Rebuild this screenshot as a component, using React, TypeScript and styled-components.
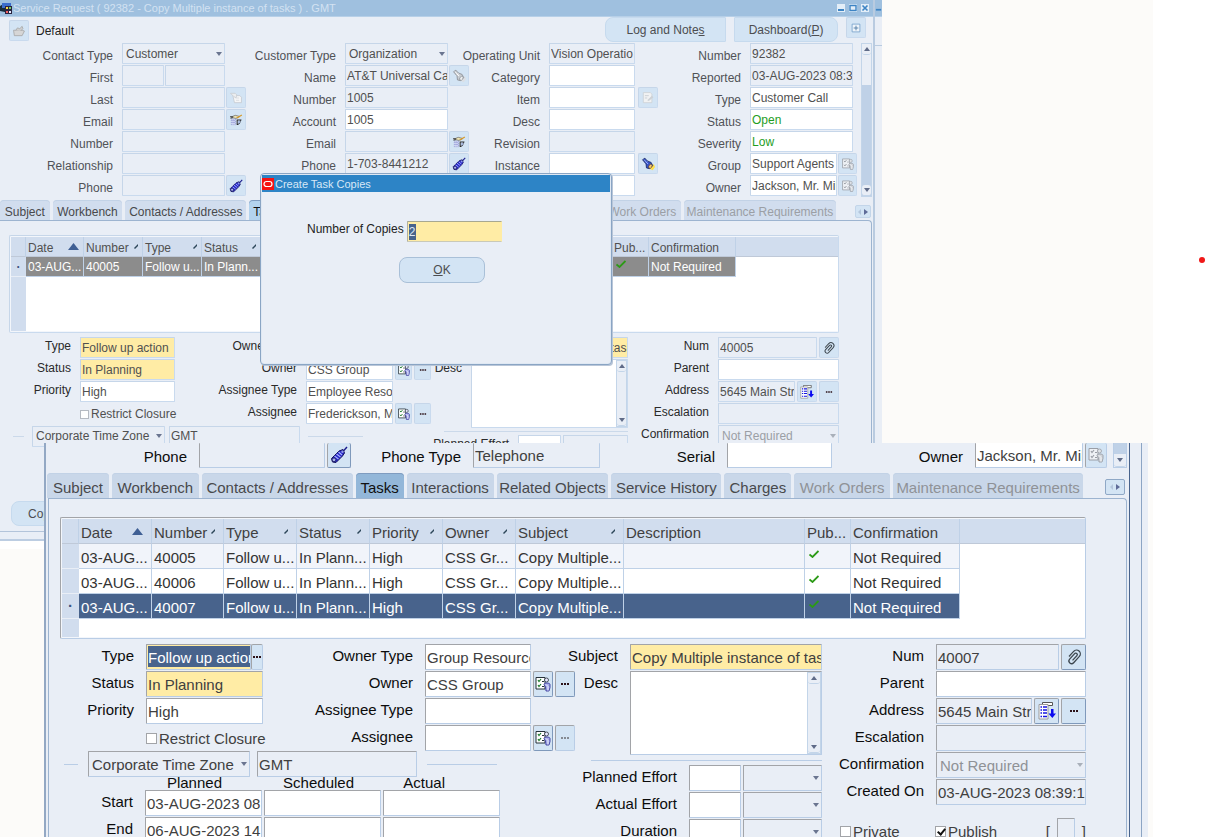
import React, { useId } from 'react';
import styled, { createGlobalStyle, css, ThemeProvider } from 'styled-components';

interface Metrics {
  font: number;
  row: number;
  field: number;
  labelGap: number;
  icon: number;
  lineTop: string;
  lineEnd: string;
  line: string;
  button: string;
  tab: string;
  tabActive: string;
  tabHeight: number;
  valueInk: string;
  labelInk: string;
  mutedInk: string;
  gridRow: number;
  gridHeight: number;
  selectedRow: string;
  columns: number[];
  blocks: number[];
  pair: number[];
  w: {
    a: number;
    b: number;
    bArea: number;
    c: number;
    d: number;
    zone: number;
    zoneLead: number;
    small: number;
    wide: number;
    unit: number;
    aux: number;
    auxWide: number;
  };
}

const compact: Metrics = {
  font: 12,
  row: 22,
  field: 21,
  labelGap: 9,
  icon: 14,
  lineTop: '#c6d6e9',
  lineEnd: '#c9daee',
  line: '#cbd9ea',
  button: '#d3e4f4',
  tab: '#d1ddee',
  tabActive: '#b3d3ee',
  tabHeight: 20,
  valueInk: '#505050',
  labelInk: '#2a2a2a',
  mutedInk: '#9b9fa5',
  gridRow: 20,
  gridHeight: 98,
  selectedRow: '#8c8c8c',
  columns: [15, 58, 59, 59, 59, 59, 59, 87, 146, 37, 87],
  blocks: [420, 199, 211],
  pair: [166, 254],
  w: { a: 95, b: 87, bArea: 123, c: 157, d: 121, zone: 133, zoneLead: 11, small: 43, wide: 95, unit: 65, aux: 17, auxWide: 20 },
};

const regular: Metrics = {
  font: 15,
  row: 27,
  field: 26,
  labelGap: 12,
  icon: 18,
  lineTop: '#a2a4a8',
  lineEnd: '#b9cde6',
  line: '#b9cde6',
  button: '#d3e4f4',
  tab: '#c9d7e9',
  tabActive: '#93b7d9',
  tabHeight: 25,
  valueInk: '#404040',
  labelInk: '#0c0c0c',
  mutedInk: '#8f9297',
  gridRow: 25,
  gridHeight: 122,
  selectedRow: '#48638c',
  columns: [17, 73, 72, 73, 73, 73, 73, 108, 181, 46, 109],
  blocks: [516, 246, 264],
  pair: [203, 313],
  w: { a: 117, b: 106, bArea: 151, c: 192, d: 150, zone: 162, zoneLead: 14, small: 52, wide: 117, unit: 79, aux: 20, auxWide: 25 },
};

declare module 'styled-components' {
  export interface DefaultTheme extends Metrics {}
}

const face = '#e9eef6';
const yellow = '#ffeca5';

const GlobalStyle = createGlobalStyle`
  * { box-sizing: border-box; }
  body { margin: 0; background: #fff; font-family: "Liberation Sans", Arial, sans-serif; overflow: hidden; }
  button, input, select, textarea { font: inherit; margin: 0; outline: none; }
`;

/* ---------- desktop and window frames ---------- */

const Page = styled.div`
  position: relative;
  height: 100vh;
  overflow: hidden;
  padding-right: 53px;
`;

const Desktop = styled.main`
  position: relative;
  height: 100%;
  background: #fcfbf9;
`;

const Marker = styled.span`
  position: absolute;
  top: 257px;
  right: 1px;
  width: 6px;
  height: 6px;
  border-radius: 50%;
  background: #f01818;
`;

const BackWindow = styled.section`
  position: absolute;
  top: 0;
  left: 0;
  width: 76.5%;
  display: flex;
  background: ${face};
  border-bottom: 2px solid #bccde2;
  box-shadow: 0 8px 0 #fff;
  font-size: ${p => p.theme.font}px;
`;

const BackBody = styled.div`
  flex: 1;
  min-width: 0;
  border-right: 2px solid #b9cbe0;
  padding-bottom: 7px;
`;

const OuterStrip = styled.div`
  width: 7px;
  height: 46px;
  border-bottom: 1px solid #b9cbe0;
`;

const TitleBar = styled.header`
  display: flex;
  align-items: center;
  height: 17px;
  background: #9fc0df;
  border-bottom: 1px solid #b7d0e8;
  color: #d3e2f2;
  font-size: 11px;
  white-space: pre;
`;

const TitleText = styled.h1`
  flex: 1;
  margin: 0;
  font-size: 11px;
  font-weight: 400;
`;

const TitleButtons = styled.div`
  display: flex;
  gap: 4px;
  padding-right: 4px;
`;

const TitleButton = styled.button`
  display: flex;
  width: 8px;
  height: 8px;
  padding: 0;
  border: 0;
  background: #e3eef8;
`;

const FrontWindow = styled.section`
  position: absolute;
  top: 443px;
  bottom: 0;
  left: 44px;
  right: 5px;
  display: flex;
  background: ${face};
  border-left: 2px solid #93a8c4;
  overflow: hidden;
  font-size: ${p => p.theme.font}px;
`;

const FrontBody = styled.div`
  flex: 1;
  min-width: 0;
  border-right: 1px solid #48638c;
`;

const FrontEdge = styled.div`
  width: 12px;
  margin-right: 6px;
  border-right: 1px solid #8ca5c4;
`;

/* ---------- form parts ---------- */

type Tone = 'read' | 'edit' | 'required' | 'marked';

const bevel = css`
  border: 1px solid ${p => p.theme.lineTop};
  border-right-color: ${p => p.theme.lineEnd};
  border-bottom-color: ${p => p.theme.lineEnd};
  border-radius: 1px;
`;

const fills: Record<Tone, string> = {
  read: face,
  edit: '#fff',
  required: yellow,
  marked: `linear-gradient(#48638c, #48638c) 1px 1px / 100% 21px no-repeat, ${yellow}`,
};

const Input = styled.input<{ $w?: number; $tone?: Tone; $ink?: string }>`
  ${bevel}
  flex: ${p => (p.$w ? 'none' : '1')};
  width: ${p => (p.$w ? `${p.$w}px` : 'auto')};
  min-width: 0;
  height: ${p => p.theme.field}px;
  padding: 0 0 0 1px;
  background: ${p => fills[p.$tone ?? 'edit']};
  color: ${p => p.$ink ?? (p.$tone === 'marked' ? '#fff' : p.theme.valueInk)};
`;

const SelectBox = styled.span<{ $w?: number }>`
  position: relative;
  display: flex;
  flex: ${p => (p.$w ? 'none' : '1')};
  width: ${p => (p.$w ? `${p.$w}px` : 'auto')};
  min-width: 0;
`;

const SelectControl = styled.select`
  ${bevel}
  appearance: none;
  width: 100%;
  height: ${p => p.theme.field}px;
  padding: 0 0 0 3px;
  background: ${face};
  color: ${p => p.theme.valueInk};
  &:disabled { color: ${p => p.theme.mutedInk}; opacity: 1; }
`;

const Caret = styled.svg`
  position: absolute;
  right: 3px;
  top: 50%;
  width: 6px;
  height: 4px;
  margin-top: -2px;
  pointer-events: none;
`;

const IconButton = styled.button<{ $w?: number; $bare?: boolean }>`
  display: flex;
  flex: none;
  align-items: center;
  justify-content: center;
  width: ${p => p.$w ?? p.theme.w.auxWide}px;
  height: ${p => p.theme.field}px;
  padding: 0;
  border: 1px solid ${p => p.theme.lineTop};
  border-right-color: ${p => (p.$bare ? p.theme.lineEnd : p.theme.font > 12 ? '#7f99bb' : p.theme.lineEnd)};
  border-bottom-color: ${p => (p.$bare ? p.theme.lineEnd : p.theme.font > 12 ? '#7f99bb' : p.theme.lineEnd)};
  border-radius: 2px;
  background: ${p => p.theme.button};
  svg { width: ${p => p.theme.icon}px; height: ${p => p.theme.icon}px; flex: none; }
`;

const Row = styled.div`
  display: flex;
  align-items: flex-start;
  height: ${p => p.theme.row}px;
`;

const Label = styled.label<{ $low?: boolean }>`
  display: flex;
  justify-content: flex-end;
  flex: 1;
  min-width: 0;
  height: ${p => p.theme.field}px;
  line-height: ${p => p.theme.field - 2}px;
  padding-top: ${p => (p.$low ? 4 : 0)}px;
  margin-right: ${p => p.theme.labelGap}px;
  color: ${p => (p.$low ? '#505256' : p.theme.labelInk)};
  white-space: nowrap;
`;

const Area = styled.div<{ $w: number; $gap?: number }>`
  display: flex;
  flex: none;
  width: ${p => p.$w}px;
  gap: ${p => p.$gap ?? 2}px;
`;

interface FieldProps {
  label: string;
  width: number;
  low?: boolean;
  gap?: number;
  children: (id: string) => React.ReactNode;
}

function Field({ label, width, low, gap, children }: FieldProps) {
  const id = useId();
  return (
    <Row>
      <Label htmlFor={id} $low={low}>{label}</Label>
      <Area $w={width} $gap={gap}>{children(id)}</Area>
    </Row>
  );
}

interface SelectProps {
  id?: string;
  name?: string;
  value: string;
  w?: number;
  disabled?: boolean;
}

function Select({ id, name, value, w, disabled }: SelectProps) {
  return (
    <SelectBox $w={w}>
      <SelectControl id={id} aria-label={name} defaultValue={value} disabled={disabled}>
        <option>{value}</option>
      </SelectControl>
      <Caret viewBox="0 0 6 4"><path d="M0 0h6L3 4z" fill={disabled ? '#a9b0ba' : '#6a7590'} /></Caret>
    </SelectBox>
  );
}

/* ---------- icons ---------- */

const PhoneIcon = () => (
  <svg viewBox="0 0 18 18">
    <path d="M17 1 12.500 6" stroke="#1a1a8c" strokeWidth="1.400" />
    <path d="M1.500 12.500 9 5l4-1.500 1.500 3.500-2 3-6.500 6.500-3.500-.5z" fill="#2626c8" stroke="#15155c" />
    <path d="M4.500 10l4 3M6.500 8l4 3M8.500 6l3.500 3" stroke="#a9b6ff" strokeWidth="1.100" />
    <circle cx="4" cy="13.800" r="1.900" fill="#aab4ee" stroke="#15155c" strokeWidth=".8" />
    <circle cx="12.500" cy="5.800" r="1.200" fill="#8f9ae8" />
  </svg>
);

const MailIcon = () => (
  <svg viewBox="0 0 18 18">
    <path d="M2 5.500 8 3l6 1.500L9 7z" fill="#f0e6b4" stroke="#555" strokeWidth=".8" />
    <path d="M1.500 4.500l4 .5M2 7l3-1" stroke="#333" />
    <path d="M3 8h5.500v7H3z" fill="#dfe3fa" stroke="#8187cc" strokeWidth=".9" strokeDasharray="1.500 1" />
    <path d="M4 10h4M4 12.500h4" stroke="#8187cc" />
    <path d="M10.500 8.500v7M10.500 9H16M15 9l-1.500 4-2.500 2" stroke="#2a2a2a" strokeWidth="1.300" fill="none" />
    <path d="M10 6.500l6.500-4" stroke="#d89a28" strokeWidth="1.600" />
    <path d="M12 10h3l-1 3-2 1z" fill="#9fb0d8" />
  </svg>
);

const TorchIcon = ({ grey }: { grey?: boolean }) => (
  <svg viewBox="0 0 18 18">
    <path d="M11 15l5.500-6L18 13l-3 4z" fill={grey ? '#dcdfe4' : '#ffe04a'} />
    <path d="M2 3.500 5 1.500 8 5l5 2 2 4-4 4-4-1-.5-5z" fill={grey ? '#c9cdd2' : '#3552c4'} stroke={grey ? '#85898f' : '#10205c'} />
    <path d="M4 3.500l5 5.500M8 6l-2 2" stroke={grey ? '#fff' : '#9fb4ff'} strokeWidth="1.200" />
    <ellipse cx="12" cy="12" rx="2" ry="2.800" transform="rotate(35 12 12)" fill={grey ? '#eceef0' : '#f0c878'} stroke={grey ? '#85898f' : '#5c3a20'} strokeWidth=".8" />
  </svg>
);

const RosterIcon = ({ grey }: { grey?: boolean }) => {
  const ink = grey ? '#9a9ea6' : '#26323a';
  return (
    <svg viewBox="0 0 18 18">
      <path d="M2 2.500h9v11.500H2z" fill={grey ? '#eef1f5' : '#fff'} stroke={ink} />
      <path d="M4 5l1 1.500L7 4M4 10l1 1.500L7 9" fill="none" stroke={grey ? ink : '#1c7a2c'} strokeWidth="1.200" />
      <path d="M8 6.500h2M8 11.500h2" stroke={ink} />
      <circle cx="12.500" cy="5" r="2" fill={grey ? '#dfe3e8' : '#e6e6ff'} stroke={ink} strokeWidth=".8" />
      <path d="M10 9.500c0-2 6-2 6 0v3l-1 3.500h-3l-.5-4z" fill={grey ? '#d2d6dc' : '#a9aeea'} stroke={grey ? ink : '#3a3a9c'} strokeWidth=".9" />
      <path d="M12 9.500l2 2v4" stroke="#fff" fill="none" strokeWidth=".8" />
    </svg>
  );
};

const PageIcon = () => (
  <svg viewBox="0 0 18 18">
    <path d="M5 6h9l2 2v7H7z" fill="#f5f6f7" stroke="#c3c8ce" />
    <path d="M2 3h6l2 2-1 4-3-2z" fill="#eceef0" stroke="#c8ccd1" />
    <path d="M9 9h4M9 12h4" stroke="#d5d8dc" />
  </svg>
);

const NoteIcon = () => (
  <svg viewBox="0 0 18 18">
    <path d="M3 2h9l2 2v11H3z" fill="#f1f2f3" stroke="#cbd0d5" />
    <path d="M5 6h5M5 9h3" stroke="#c3c8cd" />
    <path d="M8 12l6-6 2 2-6 5z" fill="#cdd1d6" />
  </svg>
);

const FolderIcon = () => (
  <svg viewBox="0 0 18 18">
    <path d="M2 8h11l3 1-3 6H3z" fill="#d6d6d6" stroke="#a4a4a4" />
    <path d="M5 8l2-3 3 1 3-3 1 3-3 3" fill="#cfcfcf" stroke="#a4a4a4" />
  </svg>
);

const ClipIcon = () => (
  <svg viewBox="0 0 18 18">
    <g transform="rotate(42 9 9)" fill="none">
      <path d="M5 12V5a3.800 3.800 0 0 1 7.600 0v8.500a2.700 2.700 0 0 1-5.400 0V6a1.500 1.500 0 0 1 3 0v6.500" stroke="#3c464e" strokeWidth="1.300" />
      <path d="M6 12V5.500M11.500 13V5" stroke="#b9c3c9" strokeWidth=".8" />
    </g>
  </svg>
);

const AddressIcon = () => (
  <svg viewBox="0 0 18 18">
    <path d="M4.500.5h10v3h-10z" fill="#fff" stroke="#555" />
    <path d="M1 2.500h9v14.500H1z" fill="#fff" stroke="#9a9a9a" />
    <path d="M2.500 5h1.500M2.500 8h1.500M2.500 11h1.500M2.500 14.500h1.500M5 5h4M5 8h4M5 11h4M5 14.500h4" stroke="#1414e0" strokeWidth="1.400" />
    <path d="M13 7h2.500v4.500H18l-3.700 4.500-3.800-4.500H13z" fill="#0a0af0" />
  </svg>
);

const DotsIcon = ({ grey }: { grey?: boolean }) => (
  <svg viewBox="0 0 18 18">
    <path d="M5 8h2v2H5zM8 8h2v2H8zM11 8h2v2h-2z" fill={grey ? '#858a92' : '#2c1218'} />
  </svg>
);

const AppIcon = () => (
  <svg width="13" height="13" viewBox="0 0 13 13">
    <path d="M0 4l5-3v9L0 9z" fill="#182c3a" />
    <path d="M2 1h9v5H2z" fill="#3b6ccc" />
    <path d="M5 4h7v8H5z" fill="#2a2340" />
    <path d="M6 5h2v2H6z" fill="#ffd84a" />
    <path d="M9 5h2v2H9z" fill="#6fd06a" />
    <path d="M6 9h2v2H6z" fill="#f06262" />
    <path d="M9 9h2v2H9z" fill="#e8ecff" />
  </svg>
);

const LogoIcon = () => (
  <svg width="12" height="12" viewBox="0 0 12 12">
    <path d="M0 0h12v12H0z" fill="#f51414" />
    <rect x="2" y="3.500" width="8" height="5" rx="2.500" fill="none" stroke="#fff" strokeWidth="1.200" />
  </svg>
);

const Check = () => (
  <svg width="10" height="8" viewBox="0 0 10 8">
    <path d="M.5 4.500 3.500 7 9.500 1" fill="none" stroke="#2c9a16" strokeWidth="1.800" />
  </svg>
);

const CellIcon = styled.svg`
  flex: none;
  margin-bottom: 3px;
`;

/* ---------- scroll bar ---------- */

const Track = styled.div<{ $w: number; $filled?: boolean }>`
  display: flex;
  flex-direction: column;
  justify-content: space-between;
  flex: none;
  width: ${p => p.$w}px;
  border: 1px solid #c3d5e9;
  background: ${p => (p.$filled ? `linear-gradient(${face} 27%, #bfd1e7 27%)` : face)};
`;

const TrackButton = styled.button`
  display: flex;
  align-items: center;
  justify-content: center;
  height: 11px;
  padding: 0;
  border: 1px solid #c3d5e9;
  border-width: 0 0 1px;
  border-radius: 3px;
  background: ${face};
`;

const Up = () => <svg width="6" height="4" viewBox="0 0 6 4"><path d="M0 4h6L3 0z" fill="#5f6b88" /></svg>;
const Down = () => <svg width="6" height="4" viewBox="0 0 6 4"><path d="M0 0h6L3 4z" fill="#5f6b88" /></svg>;

function ScrollBar({ w, filled }: { w: number; filled?: boolean }) {
  return (
    <Track $w={w} $filled={filled}>
      <TrackButton aria-label="Scroll up"><Up /></TrackButton>
      <TrackButton aria-label="Scroll down"><Down /></TrackButton>
    </Track>
  );
}

/* ---------- tabs ---------- */

const TabRow = styled.nav`
  display: flex;
  align-items: center;
  padding-left: ${p => (p.theme.font > 12 ? 1 : 0)}px;
`;

const TabList = styled.div`
  flex: 1;
  display: grid;
  grid-template-columns:
    minmax(0, 62fr) minmax(0, 87fr) minmax(0, 151fr) minmax(0, 48fr) minmax(0, 87fr)
    minmax(0, 112fr) minmax(0, 110fr) minmax(0, 67fr) minmax(0, 96fr) minmax(0, 190fr);
  gap: 3px;
`;

const Tab = styled.button<{ $active?: boolean }>`
  height: ${p => p.theme.tabHeight}px;
  padding: 4px 0 0;
  display: flex;
  align-items: center;
  justify-content: center;
  border: 0;
  border-radius: 4px 4px 0 0;
  background: ${p => (p.$active ? p.theme.tabActive : p.theme.tab)};
  color: ${p => (p.$active ? '#101010' : '#48494c')};
  box-shadow: inset 0 1px 0 ${p => (p.$active ? '#7f9cc0' : '#c2d2e6')};
  white-space: nowrap;
  &:disabled { color: ${p => p.theme.mutedInk}; }
`;

const TabScroll = styled.button`
  display: flex;
  align-items: center;
  justify-content: center;
  width: ${p => (p.theme.font > 12 ? 20 : 16)}px;
  height: ${p => (p.theme.font > 12 ? 16 : 13)}px;
  margin: 3px ${p => (p.theme.font > 12 ? 4 : 2)}px 0 ${p => (p.theme.font > 12 ? 22 : 19)}px;
  padding: 0;
  border: 1px solid ${p => (p.theme.font > 12 ? '#8fa8c6' : '#c3d5e9')};
  border-radius: 2px;
  background: ${p => p.theme.button};
`;

const tabNames = [
  'Subject', 'Workbench', 'Contacts / Addresses', 'Tasks', 'Interactions',
  'Related Objects', 'Service History', 'Charges', 'Work Orders', 'Maintenance Requirements',
];

function Tabs() {
  return (
    <TabRow>
      <TabList>
        {tabNames.map((name, i) => (
          <Tab key={name} $active={name === 'Tasks'} disabled={i > 7}>{name}</Tab>
        ))}
      </TabList>
      <TabScroll aria-label="More tabs">
        <svg width="10" height="6" viewBox="0 0 10 6">
          <path d="M3 0v6L0 3z" fill="#b4c6dc" />
          <path d="M6 0v6l4-3z" fill="#5f6b98" />
        </svg>
      </TabScroll>
    </TabRow>
  );
}

/* ---------- task grid ---------- */

const Panel = styled.div`
  border: 1px solid #9db4d0;
  border-bottom-width: 0;
  border-top-right-radius: 4px;
  ${p => p.theme.font > 12
    ? css`margin: 0 2px 0 2px; padding: 18px 40px 0 11px;`
    : css`margin-right: 1px; border-left: 0; padding: 14px 32px 0 9px;`}
`;

const GridFrame = styled.div`
  height: ${p => p.theme.gridHeight}px;
  padding: 1px 0 1px 1px;
  border: 1px solid ${p => p.theme.lineTop};
  border-right-color: ${p => p.theme.lineEnd};
  border-bottom-color: ${p => p.theme.lineEnd};
  border-radius: 2px;
  background: #f3f6fb;
  margin-bottom: ${p => (p.theme.font > 12 ? 5 : 4)}px;
`;

const Grid = styled.table`
  width: 100%;
  height: 100%;
  table-layout: fixed;
  border-collapse: separate;
  border-spacing: 0;
  background: #fff;
`;

const GridRow = styled.tr<{ $state?: 'first' | 'plain' | 'selected' }>`
  height: ${p => p.theme.gridRow}px;
  td {
    background: ${p => (p.$state === 'selected' ? p.theme.selectedRow : p.$state === 'first' ? '#f1f4fa' : '#fff')};
    color: ${p => (p.$state === 'selected' ? '#fff' : '#333')};
  }
  td:last-child { background: #fff; border: 0; }
`;

const HeadCell = styled.th`
  height: ${p => p.theme.gridRow}px;
  padding: 0 0 0 2px;
  border-right: 1px solid #bfd1e7;
  border-bottom: 1px solid #bfc9d8;
  background: #d1ddee;
  color: ${p => p.theme.valueInk};
  font-weight: 400;
  text-align: left;
  white-space: nowrap;
  overflow: hidden;
  &:last-child { border-right: 0; }
`;

const HeadContent = styled.span`
  display: flex;
  align-items: center;
  justify-content: space-between;
  padding: 3px ${p => (p.theme.font > 12 ? 8 : 4)}px 0 0;
`;

const Cell = styled.td`
  padding: ${p => (p.theme.font > 12 ? 2 : 1)}px 0 0 2px;
  border-right: 1px solid #bfd1e7;
  border-bottom: 1px solid #bfd1e7;
  white-space: nowrap;
  overflow: hidden;
  line-height: ${p => p.theme.gridRow - 4}px;
  svg { display: block; margin: 0 0 6px 2px; }
`;

const RowHead = styled.th`
  padding: 0;
  border-bottom: 1px solid ${face};
  background: #d1ddee;
  color: #3b5480;
  text-align: center;
  line-height: 10px;
`;

const RestHead = styled.td`
  background: #d1ddee;
  padding: 0;
`;

const RestBody = styled.td`
  background: #fff;
  padding: 0;
`;

const headers = ['Date', 'Number', 'Type', 'Status', 'Priority', 'Owner', 'Subject', 'Description', 'Pub...', 'Confirmation'];

function TaskGrid({ numbers, columns }: { numbers: string[]; columns: number[] }) {
  return (
    <GridFrame>
      <Grid>
        <colgroup>
          {columns.map((w, i) => <col key={i} width={w} />)}
          <col />
        </colgroup>
        <thead>
          <tr>
            <HeadCell />
            {headers.map((name, i) => (
              <HeadCell key={name}>
                <HeadContent>
                  {name}
                  {i === 0 && <CellIcon width="11" height="7" viewBox="0 0 11 7"><path d="M5.500 0 11 7H0z" fill="#3f5f94" /></CellIcon>}
                  {i > 0 && i < 7 && <CellIcon width="4" height="5" viewBox="0 0 4 5"><path d="M4 0v2L1 5 0 4z" fill="#2c4658" /></CellIcon>}
                </HeadContent>
              </HeadCell>
            ))}
            <HeadCell />
          </tr>
        </thead>
        <tbody>
          {numbers.map((number, i) => {
            const last = i === numbers.length - 1;
            return (
              <GridRow key={number} $state={last ? 'selected' : i === 0 ? 'first' : 'plain'}>
                <RowHead scope="row">{last ? '·' : ''}</RowHead>
                <Cell>03-AUG...</Cell>
                <Cell>{number}</Cell>
                <Cell>Follow u...</Cell>
                <Cell>In Plann...</Cell>
                <Cell>High</Cell>
                <Cell>CSS Gr...</Cell>
                <Cell>Copy Multiple...</Cell>
                <Cell />
                <Cell><Check /></Cell>
                <Cell>Not Required</Cell>
                <Cell />
              </GridRow>
            );
          })}
          <tr>
            <RestHead />
            <RestBody colSpan={11} />
          </tr>
        </tbody>
      </Grid>
    </GridFrame>
  );
}

/* ---------- task detail ---------- */

const Detail = styled.div`
  display: grid;
  grid-template-columns: ${p => p.theme.blocks.map(n => `minmax(0, ${n}fr)`).join(' ')};
  min-height: 164px;
`;

const Pair = styled.div`
  display: grid;
  grid-template-columns: ${p => p.theme.pair.map(n => `minmax(0, ${n}fr)`).join(' ')};
`;

const CheckLabel = styled.label`
  display: flex;
  align-items: center;
  gap: 2px;
  height: ${p => p.theme.field}px;
  padding-top: 1px;
  color: ${p => p.theme.valueInk};
  white-space: nowrap;
`;

const CheckBox = styled.input`
  position: relative;
  appearance: none;
  flex: none;
  width: ${p => (p.theme.font > 12 ? 11 : 9)}px;
  height: ${p => (p.theme.font > 12 ? 11 : 9)}px;
  border: 1px solid ${p => (p.theme.font > 12 ? '#a2a4a8' : '#b5bac2')};
  background: #fff;
  &:checked::after {
    content: '';
    position: absolute;
    left: 3px;
    top: 0;
    width: 3px;
    height: 6px;
    border: solid #111;
    border-width: 0 2px 2px 0;
    transform: rotate(40deg);
  }
`;

const ZoneRow = styled.div`
  display: flex;
  align-items: center;
  gap: ${p => (p.theme.font > 12 ? 10 : 8)}px;
  height: ${p => (p.theme.font > 12 ? 24 : 22)}px;
  padding-left: 4px;
`;

const ZoneFields = styled.div`
  display: flex;
  gap: ${p => (p.theme.font > 12 ? 7 : 4)}px;
`;

const Rule = styled.hr<{ $w?: number }>`
  flex: none;
  width: ${p => (p.$w ? `${p.$w}px` : 'auto')};
  margin: 0;
  border: 0;
  border-top: 1px solid ${p => p.theme.line};
`;

const MiddleRule = styled(Rule)`
  margin: 2px 0 ${p => (p.theme.font > 12 ? 4 : 3)}px 15px;
`;

const TimeGrid = styled.div`
  display: grid;
  grid-template-columns: 74px repeat(3, ${p => p.theme.w.wide}px);
  column-gap: 2px;
  grid-auto-rows: ${p => p.theme.row}px;
  grid-template-rows: 14px;
  padding-left: 9px;
  color: ${p => p.theme.labelInk};
  text-align: right;
`;

const TimeHead = styled.span<{ $inset: number }>`
  padding-right: ${p => p.$inset}px;
  line-height: 14px;
`;

const TimeLabel = styled.label`
  padding-right: ${p => p.theme.labelGap - 2}px;
  line-height: ${p => p.theme.field - 2}px;
`;

const MemoRow = styled(Row)`
  height: ${p => (p.theme.font > 12 ? 87 : 70)}px;
`;

const MemoBox = styled.div`
  ${bevel}
  display: flex;
  width: ${p => p.theme.w.c}px;
  height: ${p => (p.theme.font > 12 ? 84 : 69)}px;
`;

const Memo = styled.textarea`
  flex: 1;
  min-width: 0;
  border: 0;
  resize: none;
  background: #fff;
`;

const OptionRow = styled.div`
  display: grid;
  grid-template-columns: 95px 1fr auto;
  align-items: center;
  margin-top: 12px;
  padding-left: 18px;
`;

const Flex = styled.div`
  display: flex;
  align-items: center;
  gap: 7px;
  color: ${p => p.theme.valueInk};
`;

interface Task {
  number: string;
  assigneeType: string;
  assignee: string;
  ownerType: string;
  editing?: boolean;
}

const efforts = ['Planned Effort', 'Actual Effort', 'Duration'];

function TimeFields() {
  const startId = useId();
  const endId = useId();
  return (
    <TimeGrid>
      <span />
      <TimeHead $inset={40}>Planned</TimeHead>
      <TimeHead $inset={27}>Scheduled</TimeHead>
      <TimeHead $inset={55}>Actual</TimeHead>
      <TimeLabel htmlFor={startId}>Start</TimeLabel>
      <Input id={startId} defaultValue="03-AUG-2023 08:39" />
      <Input aria-label="Scheduled start" />
      <Input aria-label="Actual start" />
      <TimeLabel htmlFor={endId}>End</TimeLabel>
      <Input id={endId} defaultValue="06-AUG-2023 14:39" />
      <Input aria-label="Scheduled end" />
      <Input aria-label="Actual end" />
    </TimeGrid>
  );
}

function TaskDetail({ task, m }: { task: Task; m: Metrics }) {
  const w = m.w;
  const memoId = useId();
  return (
    <Detail>
      <div>
        <Pair>
          <div>
            <Field label="Type" width={w.a} gap={0}>
              {id => (
                <>
                  <Input id={id} $tone={task.editing ? 'marked' : 'required'} defaultValue="Follow up action" />
                  {task.editing && <IconButton $w={12} $bare aria-label="List of types"><DotsIcon /></IconButton>}
                </>
              )}
            </Field>
            <Field label="Status" width={w.a}>{id => <Input id={id} $tone="required" defaultValue="In Planning" />}</Field>
            <Field label="Priority" width={w.a}>{id => <Input id={id} defaultValue="High" />}</Field>
            <Row>
              <Label as="span" />
              <Area $w={w.a}>
                <CheckLabel><CheckBox type="checkbox" />Restrict Closure</CheckLabel>
              </Area>
            </Row>
          </div>
          <div>
            <Field label="Owner Type" width={w.bArea}>{id => <Input id={id} $w={w.b} defaultValue={task.ownerType} />}</Field>
            <Field label="Owner" width={w.bArea}>
              {id => (
                <>
                  <Input id={id} $w={w.b} defaultValue="CSS Group" />
                  <IconButton $w={w.aux} aria-label="Find owner"><RosterIcon /></IconButton>
                  <IconButton $w={w.aux} aria-label="List of owners"><DotsIcon /></IconButton>
                </>
              )}
            </Field>
            <Field label="Assignee Type" width={w.bArea}>{id => <Input id={id} $w={w.b} defaultValue={task.assigneeType} />}</Field>
            <Field label="Assignee" width={w.bArea}>
              {id => (
                <>
                  <Input id={id} $w={w.b} defaultValue={task.assignee} />
                  <IconButton $w={w.aux} aria-label="Find assignee"><RosterIcon /></IconButton>
                  <IconButton $w={w.aux} $bare aria-label="List of assignees"><DotsIcon grey={task.editing} /></IconButton>
                </>
              )}
            </Field>
          </div>
        </Pair>
        <ZoneRow>
          <Rule $w={w.zoneLead} />
          <ZoneFields>
            <Select name="Time zone source" value="Corporate Time Zone" w={w.zone} />
            <Input aria-label="Time zone" $w={w.zone - 2} $tone="read" readOnly defaultValue="GMT" />
          </ZoneFields>
          <Rule $w={w.zoneLead * 5} />
        </ZoneRow>
        {task.editing && <TimeFields />}
      </div>
      <div>
        <Field label="Subject" width={w.c}>{id => <Input id={id} $tone="required" defaultValue="Copy Multiple instance of tasks" />}</Field>
        <MemoRow>
          <Label htmlFor={memoId}>Desc</Label>
          <MemoBox>
            <Memo id={memoId} />
            <ScrollBar w={m.font > 12 ? 14 : 11} />
          </MemoBox>
        </MemoRow>
        <MiddleRule />
        {(task.editing ? efforts : efforts.slice(0, 1)).map(name => (
          <Field key={name} label={name} width={w.small + w.unit + 2}>
            {id => (
              <>
                <Input id={id} $w={w.small} />
                <Select name={`${name} unit`} value="" w={w.unit} />
              </>
            )}
          </Field>
        ))}
      </div>
      <div>
        <Field label="Num" width={w.d}>
          {id => (
            <>
              <Input id={id} $tone="read" readOnly defaultValue={task.number} />
              <IconButton aria-label="Attachments"><ClipIcon /></IconButton>
            </>
          )}
        </Field>
        <Field label="Parent" width={w.d}>{id => <Input id={id} />}</Field>
        <Field label="Address" width={w.d}>
          {id => (
            <>
              <Input id={id} $tone="read" readOnly defaultValue="5645 Main Street" />
              <IconButton aria-label="Address details"><AddressIcon /></IconButton>
              <IconButton aria-label="List of addresses"><DotsIcon /></IconButton>
            </>
          )}
        </Field>
        <Field label="Escalation" width={w.d}>{id => <Input id={id} $tone="read" readOnly />}</Field>
        <Field label="Confirmation" width={w.d}>{id => <Select id={id} value="Not Required" disabled />}</Field>
        {task.editing && (
          <>
            <Field label="Created On" width={w.d}>{id => <Input id={id} $tone="read" readOnly defaultValue="03-AUG-2023 08:39:17" />}</Field>
            <OptionRow>
              <CheckLabel><CheckBox type="checkbox" />Private</CheckLabel>
              <CheckLabel><CheckBox type="checkbox" defaultChecked />Publish</CheckLabel>
              <Flex>
                [<Input aria-label="Flexfield" $w={18} $tone="read" readOnly />]
              </Flex>
            </OptionRow>
          </>
        )}
      </div>
    </Detail>
  );
}

/* ---------- back window content ---------- */

const Toolbar = styled.div`
  display: flex;
  align-items: flex-start;
  gap: 8px;
  height: 26px;
  padding: 0 7px 0 9px;
`;

const ToolGroup = styled.div`
  display: flex;
  flex: 1;
  align-items: center;
  gap: 7px;
  padding-top: 3px;
  color: #222;
`;

const WideButton = styled.button<{ $w: number; $side: 'left' | 'right' | 'both' }>`
  width: ${p => p.$w}px;
  height: 25px;
  padding: 0;
  border: 1px solid #c6daee;
  border-radius: ${p => (p.$side === 'left' ? '8px 1px 1px 8px' : p.$side === 'right' ? '1px 8px 8px 1px' : '8px')};
  background: #d3e4f4;
  color: #4c4d50;
`;

const HeaderForm = styled.div`
  display: flex;
  padding-right: 1px;
`;

const HeaderGroups = styled.div`
  flex: 1;
  display: grid;
  grid-template-columns: minmax(0, 246fr) minmax(0, 223fr) minmax(0, 189fr) minmax(0, 199fr);
  padding-right: 4px;
`;

const TabSpacer = styled.div`
  padding-top: 3px;
`;

const Footer = styled.footer`
  margin-right: 1px;
  padding: 0 0 5px 11px;
  border: solid #b3c4da;
  border-width: 0 1px 1px 0;
`;

interface Entry {
  label: string;
  value?: string;
  tone?: Tone;
  ink?: string;
  select?: boolean;
  split?: boolean;
  icon?: React.ReactNode;
}

const groups: { width: number; field: number; entries: Entry[] }[] = [
  {
    width: 124,
    field: 103,
    entries: [
      { label: 'Contact Type', value: 'Customer', select: true },
      { label: 'First', tone: 'read', split: true },
      { label: 'Last', tone: 'read', icon: <PageIcon /> },
      { label: 'Email', tone: 'read', icon: <MailIcon /> },
      { label: 'Number', tone: 'read' },
      { label: 'Relationship', tone: 'read' },
      { label: 'Phone', tone: 'read', icon: <PhoneIcon /> },
    ],
  },
  {
    width: 124,
    field: 103,
    entries: [
      { label: 'Customer Type', value: 'Organization', select: true },
      { label: 'Name', value: 'AT&T Universal Card', tone: 'read', icon: <TorchIcon grey /> },
      { label: 'Number', value: '1005', tone: 'read' },
      { label: 'Account', value: '1005' },
      { label: 'Email', tone: 'read', icon: <MailIcon /> },
      { label: 'Phone', value: '1-703-8441212', tone: 'read', icon: <PhoneIcon /> },
      { label: 'Phone Type', value: '', tone: 'read' },
    ],
  },
  {
    width: 109,
    field: 86,
    entries: [
      { label: 'Operating Unit', value: 'Vision Operatio', tone: 'read' },
      { label: 'Category' },
      { label: 'Item', icon: <NoteIcon /> },
      { label: 'Desc' },
      { label: 'Revision', tone: 'read' },
      { label: 'Instance', icon: <TorchIcon /> },
      { label: 'Serial' },
    ],
  },
  {
    width: 107,
    field: 103,
    entries: [
      { label: 'Number', value: '92382', tone: 'read' },
      { label: 'Reported', value: '03-AUG-2023 08:39', tone: 'read' },
      { label: 'Type', value: 'Customer Call' },
      { label: 'Status', value: 'Open', ink: '#1f9e1f' },
      { label: 'Severity', value: 'Low', ink: '#1f9e1f' },
      { label: 'Group', value: 'Support Agents', icon: <RosterIcon grey /> },
      { label: 'Owner', value: 'Jackson, Mr. Mike', icon: <RosterIcon grey /> },
    ],
  },
];

/* ---------- dialog ---------- */

const Dialog = styled.form`
  position: absolute;
  top: 173px;
  left: 260px;
  width: 352px;
  height: 192px;
  border: 1px solid #8aa5c4;
  border-radius: 4px;
  background: ${face};
  box-shadow: 1px 1px 0 #b9c6d8, inset 0 0 0 1px #dfe8f3;
  color: #222;
`;

const DialogTitle = styled.h2`
  display: flex;
  align-items: center;
  gap: 1px;
  height: 17px;
  margin: 1px;
  background: #2d84c6;
  color: #d8e8f6;
  font-size: 11px;
  font-weight: 400;
`;

const DialogRow = styled.div`
  display: flex;
  gap: 3px;
  padding: 28px 0 0 46px;
`;

const DialogLabel = styled.label`
  line-height: 16px;
  white-space: nowrap;
`;

const CopiesInput = styled(Input)`
  border-color: #a8a890 ${yellow} #c9c9b8 #b0b0a0;
  background: linear-gradient(#48638c, #48638c) 1px 2px / 7px 16px no-repeat, ${yellow};
  color: #dfe8f4;
`;

const OkButton = styled(WideButton)`
  display: block;
  margin: 15px 0 0 138px;
  height: 26px;
  border-color: #a9c0d8;
`;

function CopiesDialog() {
  const id = useId();
  return (
    <Dialog onSubmit={e => e.preventDefault()}>
      <DialogTitle><LogoIcon />Create Task Copies</DialogTitle>
      <DialogRow>
        <DialogLabel htmlFor={id}>Number of Copies</DialogLabel>
        <CopiesInput id={id} $w={95} defaultValue="2" />
      </DialogRow>
      <OkButton type="submit" $w={86} $side="both"><u>O</u>K</OkButton>
    </Dialog>
  );
}

/* ---------- front window content ---------- */

const CutRow = styled.div`
  display: grid;
  grid-template-columns: minmax(0, 305fr) minmax(0, 249fr) minmax(0, 232fr) minmax(0, 275fr) 20px;
  padding-right: 2px;
  height: 30px;
  overflow: hidden;
  input, button { height: 25px; border-top: 0; }
  label { padding-top: 2px; height: 25px; }
`;

const CutThumb = styled.div`
  display: flex;
  align-items: flex-end;
  height: 25px;
  margin-left: 6px;
  border: 1px solid #b9cde6;
  border-top: 0;
  background: linear-gradient(#bfd1e7 45%, ${face} 45%);
  button { flex: 1; height: 13px; }
`;

const MinimiseMark = () => <svg width="8" height="8" viewBox="0 0 8 8"><path d="M1 5h6v2H1z" fill="#3d84c4" /></svg>;

export default function App() {
  return (
    <Page>
      <GlobalStyle />
      <Desktop>
        <ThemeProvider theme={compact}>
          <BackWindow>
            <BackBody>
              <TitleBar>
                <AppIcon />
                <TitleText>Service Request ( 92382 - Copy Multiple instance of tasks ) . GMT</TitleText>
                <TitleButtons>
                  <TitleButton aria-label="Minimise"><MinimiseMark /></TitleButton>
                  <TitleButton aria-label="Maximise">
                    <svg width="8" height="8" viewBox="0 0 8 8"><path d="M1 1.500h6v5H1z" fill="none" stroke="#3d84c4" strokeWidth="1.400" /></svg>
                  </TitleButton>
                  <TitleButton aria-label="Close">
                    <svg width="8" height="8" viewBox="0 0 8 8"><path d="M1.500 1.500l5 5M6.500 1.500l-5 5" stroke="#3d84c4" strokeWidth="1.600" /></svg>
                  </TitleButton>
                </TitleButtons>
              </TitleBar>
              <Toolbar>
                <ToolGroup>
                  <IconButton aria-label="Open folder"><FolderIcon /></IconButton>
                  Default
                </ToolGroup>
                <WideButton $w={121} $side="left">Log and Note<u>s</u></WideButton>
                <WideButton $w={104} $side="right">Dashboard(<u>P</u>)</WideButton>
                <IconButton aria-label="Expand">
                  <svg viewBox="0 0 18 18"><path d="M4 4h10v10H4z" fill="#eef4fa" stroke="#6f9cc8" /><path d="M9 6v6M6 9h6" stroke="#3b6c9c" /></svg>
                </IconButton>
              </Toolbar>
              <HeaderForm>
                <HeaderGroups>
                  {groups.map((group, g) => (
                    <div key={g}>
                      {group.entries.map(entry => (
                        <Field key={entry.label} label={entry.label} width={group.width} low gap={g === 2 ? 3 : 1}>
                          {id => (
                            <>
                              {entry.select && <Select id={id} value={entry.value ?? ''} w={group.field} />}
                              {entry.split && (
                                <>
                                  <Input id={id} $w={42} $tone="read" readOnly />
                                  <Input aria-label="Middle" $w={60} $tone="read" readOnly />
                                </>
                              )}
                              {!entry.select && !entry.split && (
                                <Input
                                  id={id}
                                  $w={g === 3 && entry.icon ? 87 : group.field}
                                  $tone={entry.tone}
                                  $ink={entry.ink}
                                  readOnly={entry.tone === 'read'}
                                  defaultValue={entry.value}
                                />
                              )}
                              {entry.icon && <IconButton $w={g === 3 ? 19 : 20} aria-label={`${entry.label} details`}>{entry.icon}</IconButton>}
                            </>
                          )}
                        </Field>
                      ))}
                    </div>
                  ))}
                </HeaderGroups>
                <ScrollBar w={11} filled />
              </HeaderForm>
              <TabSpacer><Tabs /></TabSpacer>
              <Panel>
                <TaskGrid numbers={['40005']} columns={compact.columns} />
                <TaskDetail
                  m={compact}
                  task={{ number: '40005', ownerType: 'Group Resource', assigneeType: 'Employee Resource', assignee: 'Frederickson, Mr.' }}
                />
              </Panel>
              <Footer>
                <WideButton $w={90} $side="both">Copy Task</WideButton>
              </Footer>
            </BackBody>
            <OuterStrip>
              <TitleBar><MinimiseMark /></TitleBar>
            </OuterStrip>
            <CopiesDialog />
          </BackWindow>
        </ThemeProvider>
        <ThemeProvider theme={regular}>
          <FrontWindow>
            <FrontBody>
              <CutRow>
                <Field label="Phone" width={152}>
                  {id => (
                    <>
                      <Input id={id} $w={126} $tone="read" readOnly />
                      <IconButton $w={24} aria-label="Dial"><PhoneIcon /></IconButton>
                    </>
                  )}
                </Field>
                <Field label="Phone Type" width={127}>{id => <Input id={id} $tone="read" readOnly defaultValue="Telephone" />}</Field>
                <Field label="Serial" width={105}>{id => <Input id={id} />}</Field>
                <Field label="Owner" width={132}>
                  {id => (
                    <>
                      <Input id={id} $w={108} defaultValue="Jackson, Mr. Mike" />
                      <IconButton $w={22} $bare aria-label="Find owner"><RosterIcon grey /></IconButton>
                    </>
                  )}
                </Field>
                <CutThumb><TrackButton aria-label="Scroll down"><Down /></TrackButton></CutThumb>
              </CutRow>
              <Tabs />
              <Panel>
                <TaskGrid numbers={['40005', '40006', '40007']} columns={regular.columns} />
                <TaskDetail
                  m={regular}
                  task={{ number: '40007', ownerType: 'Group Resource', assigneeType: '', assignee: '', editing: true }}
                />
              </Panel>
            </FrontBody>
            <FrontEdge />
          </FrontWindow>
        </ThemeProvider>
      </Desktop>
      <Marker />
    </Page>
  );
}
